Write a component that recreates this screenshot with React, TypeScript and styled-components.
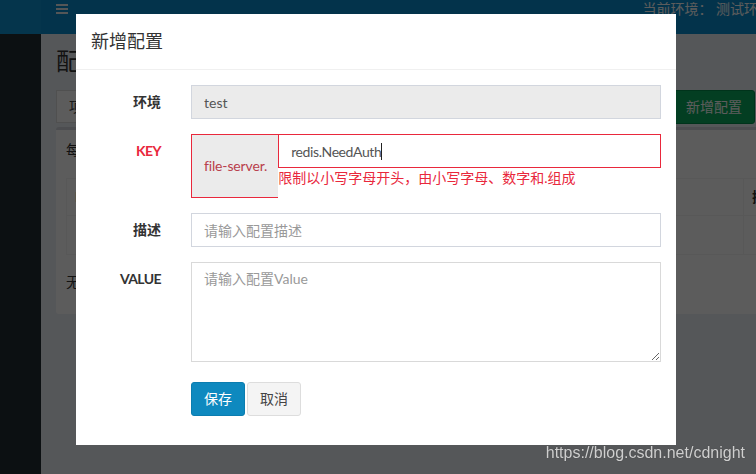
import React, { useEffect, useRef, useState } from "react";
import styled, { createGlobalStyle } from "styled-components";

const RED = "#e9283c";
const KEY_VALUE = "redis.NeedAuth";
const KEY_SPACING = -0.4;

const Global = createGlobalStyle`
  html, body { margin: 0; padding: 0; }
  body {
    font-family: Lato, "Noto Sans CJK SC", sans-serif;
    font-size: 14px;
    line-height: 20px;
    color: #333;
    overflow: hidden;
    width: 756px;
    height: 474px;
  }
  * { box-sizing: border-box; }
`;

const Page = styled.div`
  display: grid;
  grid-template-columns: 41px 1fr;
  grid-template-rows: 34px 1fr;
  width: 756px;
  height: 474px;
  overflow: hidden;
  background: #ecf0f5;
`;

const Header = styled.header`
  grid-column: 1 / -1;
  display: flex;
  align-items: flex-start;
  background: #0b8ecf;
  overflow: hidden;
`;

const LogoArea = styled.div`
  width: 41px;
  height: 34px;
  flex: none;
  background: #1092d2;
`;

const Burger = styled.div`
  margin-left: 15px;
  padding-top: 4px;
  flex: none;
  display: flex;
`;

const EnvText = styled.div`
  margin-left: auto;
  margin-right: -16px;
  flex: none;
  white-space: nowrap;
  color: #fff;
  line-height: 20px;
  margin-top: -1px;
`;

const Sidebar = styled.aside`
  background: #222d32;
`;

const Content = styled.main`
  padding: 14px 0 0 15px;
  overflow: hidden;
  min-width: 0;
  display: flex;
  flex-direction: column;
`;

const PageTitle = styled.h1`
  margin: 0;
  font-size: 24px;
  line-height: 26px;
  font-weight: 400;
  color: #333;
`;

const Toolbar = styled.div`
  display: flex;
  justify-content: space-between;
  align-items: flex-start;
  margin-top: 16px;
`;

const Tab = styled.div`
  height: 33px;
  padding: 6px 12px;
  border: 1px solid #ddd;
  background: #fff;
  color: #444;
  white-space: nowrap;
`;

const SuccessButton = styled.div`
  height: 34px;
  padding: 6px 12px;
  margin-right: 1px;
  background: #0aad5e;
  border: 1px solid #008d4c;
  border-radius: 3px;
  color: #fff;
  white-space: nowrap;
`;

const Box = styled.section`
  margin-top: 3px;
  width: 760px;
  height: 187px;
  flex: none;
  background: #fff;
  border-top: 3px solid #d2d6de;
  border-radius: 3px;
  padding: 10px;
`;

const BoxText = styled.div<{ $mt?: number }>`
  margin-top: ${(p) => p.$mt ?? 0}px;
  color: #333;
  white-space: nowrap;
`;

const Table = styled.div`
  margin-top: 18px;
  border: 1px solid #f4f4f4;
`;

const TRow = styled.div<{ $h: number; $head?: boolean }>`
  display: grid;
  grid-template-columns: 677px 1fr;
  height: ${(p) => p.$h}px;
  border-bottom: 1px solid #f4f4f4;
  font-weight: ${(p) => (p.$head ? 700 : 400)};
  &:last-child { border-bottom: none; }
`;

const TCell = styled.div`
  padding: 8px;
  border-right: 1px solid #f4f4f4;
  white-space: nowrap;
`;

const Backdrop = styled.div`
  position: fixed;
  inset: 0;
  background: rgba(0, 0, 0, 0.64);
`;

const Modal = styled.div`
  position: fixed;
  top: 14px;
  left: 76px;
  width: 600px;
  background: #fff;
`;

const ModalHeader = styled.div`
  padding: 15px;
  border-bottom: 1px solid #f0f0f0;
`;

const ModalTitle = styled.h4`
  margin: 0;
  font-size: 18px;
  line-height: 25px;
  font-weight: 400;
  color: #333;
`;

const ModalBody = styled.div`
  padding: 15px 0;
`;

const FormRow = styled.div<{ $pt?: number; $mb?: number }>`
  display: grid;
  grid-template-columns: 100px 500px;
  padding-top: ${(p) => p.$pt ?? 0}px;
  margin-bottom: ${(p) => p.$mb ?? 15}px;
`;

const Label = styled.label<{ $error?: boolean; $latin?: boolean }>`
  padding: 7px 15px 0;
  text-align: right;
  font-weight: 700;
  line-height: 20px;
  letter-spacing: ${(p) => (p.$latin ? "-0.6px" : "0")};
  color: ${(p) => (p.$error ? RED : "#333")};
`;

const Field = styled.div`
  padding: 0 15px;
  display: flex;
`;

const TextInput = styled.input<{ $error?: boolean }>`
  display: block;
  width: 100%;
  height: 34px;
  padding: 6px 12px;
  border: 1px solid ${(p) => (p.$error ? RED : "#d2d6de")};
  border-radius: 0;
  background: ${(p) => (p.disabled ? "#ebebeb" : "#fff")};
  font-family: inherit;
  font-size: 14px;
  line-height: 20px;
  color: #555;
  outline: none;
  caret-color: transparent;
  &::placeholder { color: #999; }
  &:disabled { color: #555; opacity: 1; -webkit-text-fill-color: #555; }
`;

const KeyInput = styled(TextInput)`
  letter-spacing: ${KEY_SPACING}px;
`;

const KeyInputWrap = styled.div`
  position: relative;
`;

const Caret = styled.span`
  position: absolute;
  top: 9px;
  width: 1px;
  height: 17px;
  background: #222;
  pointer-events: none;
`;

const TextArea = styled.textarea`
  display: block;
  width: 100%;
  height: 100px;
  padding: 6px 12px;
  border: 1px solid #d9d9d9;
  border-radius: 0;
  font-family: inherit;
  font-size: 14px;
  line-height: 20px;
  color: #555;
  resize: vertical;
  outline: none;
  &::placeholder { color: #999; }
`;

const Addon = styled.span`
  display: flex;
  align-items: center;
  flex: none;
  padding: 0 11px 0 12px;
  background: #ebebeb;
  border: 1px solid ${RED};
  border-right: none;
  color: #b9404c;
  letter-spacing: -0.15px;
  white-space: nowrap;
`;

const KeyColumn = styled.div`
  flex: 1;
  display: flex;
  flex-direction: column;
`;

const HelpText = styled.span`
  display: block;
  color: ${RED};
  line-height: 20px;
  margin-bottom: 10px;
  white-space: nowrap;
`;

const Buttons = styled.div`
  padding: 0 15px;
  display: flex;
  gap: 2px;
`;

const Button = styled.button<{ $primary?: boolean }>`
  height: 34px;
  padding: 6px 12px;
  border-radius: 3px;
  border: 1px solid ${(p) => (p.$primary ? "#0b7db0" : "#ddd")};
  background: ${(p) => (p.$primary ? "#0e89bf" : "#f4f4f4")};
  color: ${(p) => (p.$primary ? "#fff" : "#444")};
  font-family: inherit;
  font-size: 14px;
  line-height: 20px;
  cursor: pointer;
`;

const Watermark = styled.div`
  position: fixed;
  right: 11px;
  bottom: 12px;
  font-family: "Liberation Sans", Arial, sans-serif;
  font-size: 16px;
  line-height: 18px;
  color: #cfcfcf;
  text-shadow: 0 0 1px rgba(0, 0, 0, 0.35);
  white-space: nowrap;
`;

function BurgerIcon() {
  return (
    <svg width="12" height="10" viewBox="0 0 12 10">
      <rect x="0" y="0" width="12" height="2" fill="#e8eef2" />
      <rect x="0" y="4" width="12" height="2" fill="#e8eef2" />
      <rect x="0" y="8" width="12" height="2" fill="#e8eef2" />
    </svg>
  );
}

function measureKey(): number {
  const canvas = document.createElement("canvas");
  const ctx = canvas.getContext("2d");
  if (!ctx) return 90;
  ctx.font = '14px Lato, "Noto Sans CJK SC", sans-serif';
  return ctx.measureText(KEY_VALUE).width + KEY_VALUE.length * KEY_SPACING;
}

export default function App() {
  const [caretLeft, setCaretLeft] = useState(103);
  const keyRef = useRef<HTMLInputElement>(null);

  useEffect(() => {
    const update = () => setCaretLeft(13 + measureKey());
    update();
    if (document.fonts && document.fonts.ready) {
      document.fonts.ready.then(update);
    }
  }, []);

  return (
    <>
      <Global />
      <Page>
        <Header>
          <LogoArea />
          <Burger>
            <BurgerIcon />
          </Burger>
          <EnvText>当前环境： 测试环境</EnvText>
        </Header>
        <Sidebar />
        <Content>
          <PageTitle>配置管理</PageTitle>
          <Toolbar>
            <Tab>项目配置列表</Tab>
            <SuccessButton>新增配置</SuccessButton>
          </Toolbar>
          <Box>
            <BoxText>每页显示 10 条</BoxText>
            <Table>
              <TRow $h={37} $head>
                <TCell>KEY</TCell>
                <TCell>操作</TCell>
              </TRow>
              <TRow $h={38}>
                <TCell></TCell>
                <TCell></TCell>
              </TRow>
            </Table>
            <BoxText $mt={17}>无数据</BoxText>
          </Box>
        </Content>
      </Page>
      <Backdrop />
      <Modal>
        <ModalHeader>
          <ModalTitle>新增配置</ModalTitle>
        </ModalHeader>
        <ModalBody>
          <FormRow>
            <Label>环境</Label>
            <Field>
              <TextInput disabled value="test" readOnly />
            </Field>
          </FormRow>
          <FormRow>
            <Label $error $latin>KEY</Label>
            <Field>
              <Addon>file-server.</Addon>
              <KeyColumn>
                <KeyInputWrap>
                  <KeyInput $error ref={keyRef} defaultValue={KEY_VALUE} />
                  <Caret style={{ left: caretLeft }} />
                </KeyInputWrap>
                <HelpText>限制以小写字母开头，由小写字母、数字和.组成</HelpText>
              </KeyColumn>
            </Field>
          </FormRow>
          <FormRow>
            <Label>描述</Label>
            <Field>
              <TextInput placeholder="请输入配置描述" />
            </Field>
          </FormRow>
          <FormRow>
            <Label $latin>VALUE</Label>
            <Field>
              <TextArea placeholder="请输入配置Value" />
            </Field>
          </FormRow>
          <FormRow $pt={5} $mb={14}>
            <div />
            <Buttons>
              <Button $primary>保存</Button>
              <Button>取消</Button>
            </Buttons>
          </FormRow>
        </ModalBody>
      </Modal>
      <Watermark>https://blog.csdn.net/cdnight</Watermark>
    </>
  );
}
